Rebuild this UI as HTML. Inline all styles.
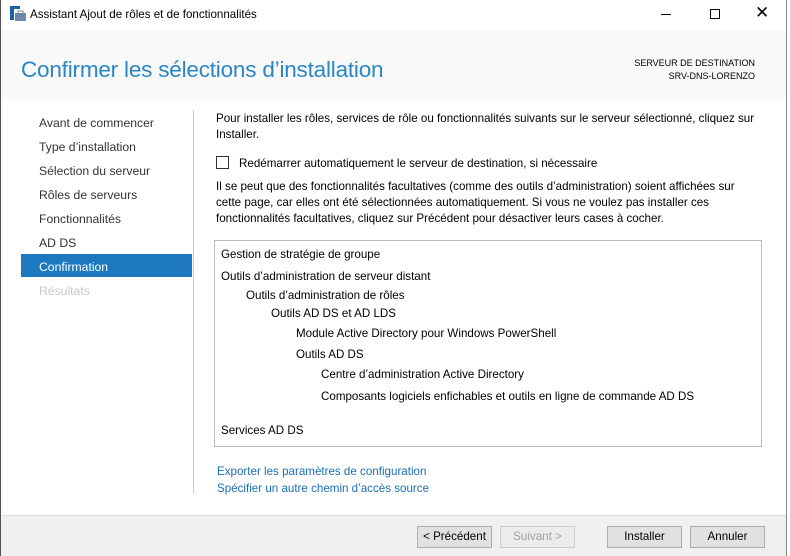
<!DOCTYPE html><html><head><style>
*{margin:0;padding:0;box-sizing:border-box}
body{width:790px;height:556px;overflow:hidden;font-family:"Liberation Sans",sans-serif;font-size:11.6px;color:#000;background:#fff;position:relative}
.a{position:absolute;white-space:nowrap}
.nav{left:39px;font-size:12.2px;color:#333}
.btn{position:absolute;top:526px;height:22px;border:1px solid #adadad;background:#e1e1e1;font-size:11.6px;text-align:center;line-height:20px}
.l{color:#1a6fb5;font-size:11.6px}
</style></head><body>
<div class="a" style="left:0;top:0;width:790px;height:30px;background:#fff"></div>
<div class="a" style="left:0;top:30px;width:787px;height:70px;background:#f9f9f9"></div>
<div class="a" style="left:0;top:0;width:1px;height:556px;background:#555"></div>
<div class="a" style="left:786px;top:0;width:4px;height:556px;background:#fff;border-left:1px solid #888"></div>
<svg class="a" style="left:10px;top:6px" width="16" height="16"><rect x="0" y="0" width="4" height="14" fill="#1f5fa8"/><rect x="0" y="0" width="10" height="3" fill="#1f5fa8"/><rect x="5" y="7" width="11" height="8" fill="#6a8aa8"/><rect x="8" y="5" width="5" height="3" fill="none" stroke="#6a8aa8"/></svg>
<div class="a" style="left:30px;top:8px;font-size:11.6px">Assistant Ajout de rôles et de fonctionnalités</div>
<div class="a" style="left:661px;top:14px;width:10px;height:1px;background:#000"></div>
<div class="a" style="left:710px;top:9px;width:10px;height:10px;border:1px solid #000"></div>
<div class="a" style="left:755px;top:3px;font-size:17px">✕</div>
<div class="a" style="left:21px;top:57px;font-size:22.5px;color:#2a86c4;letter-spacing:-0.2px">Confirmer les sélections d’installation</div>
<div class="a" style="right:35px;top:57px;font-size:9px;text-align:right;line-height:13px">SERVEUR DE DESTINATION<br>SRV-DNS-LORENZO</div>
<div class="a nav" style="top:116px">Avant de commencer</div>
<div class="a nav" style="top:140px">Type d’installation</div>
<div class="a nav" style="top:164px">Sélection du serveur</div>
<div class="a nav" style="top:188px">Rôles de serveurs</div>
<div class="a nav" style="top:212px">Fonctionnalités</div>
<div class="a nav" style="top:236px">AD DS</div>
<div class="a" style="left:21px;top:254px;width:171px;height:23px;background:#1c79c0"></div>
<div class="a nav" style="top:260px;color:#fff">Confirmation</div>
<div class="a nav" style="top:284px;color:#c8c8c8">Résultats</div>
<div class="a" style="left:193px;top:110px;width:1px;height:384px;background:#ccc"></div>
<div class="a" style="left:216px;top:111px;line-height:16px">Pour installer les rôles, services de rôle ou fonctionnalités suivants sur le serveur sélectionné, cliquez sur<br>Installer.</div>
<div class="a" style="left:216px;top:156px;width:13px;height:13px;border:1px solid #333;background:#fff"></div>
<div class="a" style="left:239px;top:157px">Redémarrer automatiquement le serveur de destination, si nécessaire</div>
<div class="a" style="left:216px;top:179px;line-height:16px">Il se peut que des fonctionnalités facultatives (comme des outils d’administration) soient affichées sur<br>cette page, car elles ont été sélectionnées automatiquement. Si vous ne voulez pas installer ces<br>fonctionnalités facultatives, cliquez sur Précédent pour désactiver leurs cases à cocher.</div>
<div class="a" style="left:214px;top:240px;width:548px;height:207px;border:1px solid #bbb"></div>
<div class="a" style="left:221px;top:248px">Gestion de stratégie de groupe</div>
<div class="a" style="left:221px;top:270px">Outils d’administration de serveur distant</div>
<div class="a" style="left:246px;top:289px">Outils d’administration de rôles</div>
<div class="a" style="left:271px;top:307px">Outils AD DS et AD LDS</div>
<div class="a" style="left:296px;top:327px">Module Active Directory pour Windows PowerShell</div>
<div class="a" style="left:296px;top:348px">Outils AD DS</div>
<div class="a" style="left:321px;top:368px">Centre d’administration Active Directory</div>
<div class="a" style="left:321px;top:390px">Composants logiciels enfichables et outils en ligne de commande AD DS</div>
<div class="a" style="left:221px;top:424px">Services AD DS</div>
<div class="a l" style="left:217px;top:465px">Exporter les paramètres de configuration</div>
<div class="a l" style="left:217px;top:482px">Spécifier un autre chemin d’accès source</div>
<div class="a" style="left:1px;top:515px;width:785px;height:41px;background:#f0f0f0;border-top:1px solid #dcdcdc"></div>
<div class="btn" style="left:417px;width:75px">&lt; Précédent</div>
<div class="btn" style="left:500px;width:75px;color:#a0a0a0;background:#ececec;border-color:#ccc">Suivant &gt;</div>
<div class="btn" style="left:607px;width:75px">Installer</div>
<div class="btn" style="left:690px;width:75px">Annuler</div>
</body></html>
